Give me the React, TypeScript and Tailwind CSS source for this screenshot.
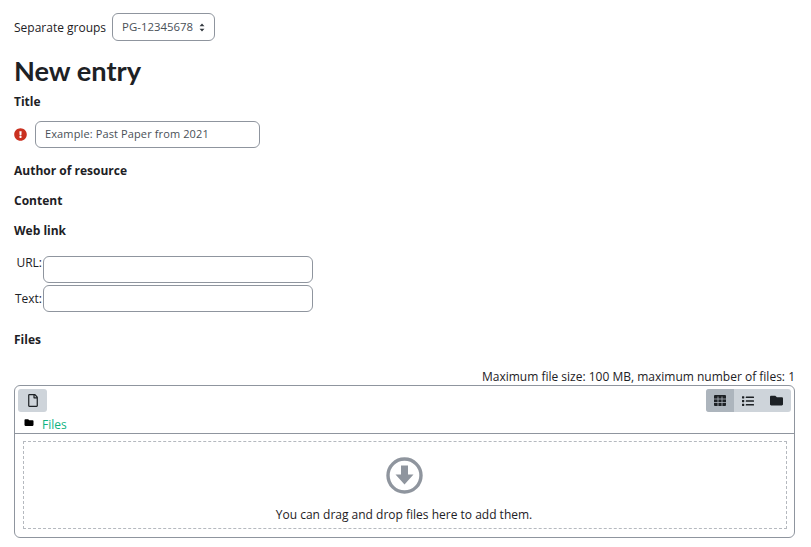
import { FaExclamationCircle, FaFolder, FaList, FaRegFile } from "react-icons/fa";

const Label = ({ text, className }: { text: string; className: string }) => (
  <div className={`text-[12px] leading-[18px] font-bold text-[#1d2125] ${className}`}>{text}</div>
);

const App = () => {
  return (
    <div className="w-[811px] h-[547px] overflow-hidden bg-white pl-[14px] pr-[16px] pt-[13px] font-['Open_Sans',sans-serif] text-[#1d2125]">
      {/* group selector */}
      <div className="flex items-center h-[28px] text-[12px]">
        <span className="mr-[6px] pt-[1px]">Separate groups</span>
        <div className="flex items-center h-[28px] w-[103px] pl-[9px] border border-[#8f959e] rounded-[6px] text-[#495057] text-[11.4px]">
          <span>PG-12345678</span>
          <svg className="ml-[6px]" width="6" height="9" viewBox="0 0 7 11">
            <path d="M3.5 0.5 L6.5 4 H0.5 Z M3.5 10.5 L6.5 7 H0.5 Z" fill="#343a40" />
          </svg>
        </div>
      </div>

      <h1 className="mt-[13px] text-[27.2px] leading-[34px] font-bold font-['Lato',sans-serif]">New entry</h1>

      <Label text="Title" className="mt-[5px]" />
      <div className="flex items-center mt-[10px]">
        <FaExclamationCircle className="text-[#ca3120] w-[13px] h-[13px] mr-[8px]" />
        <div className="flex items-center w-[225px] h-[27px] pl-[9px] border border-[#8f959e] rounded-[6px] text-[11px] tracking-[0.12px] text-[#495057]">
          Example: Past Paper from 2021
        </div>
      </div>

      <Label text="Author of resource" className="mt-[14px]" />
      <Label text="Content" className="mt-[12px]" />
      <Label text="Web link" className="mt-[12px]" />

      {/* web link inputs */}
      <div className="mt-[16px] flex flex-col gap-[2px] text-[12px]">
        <div className="flex">
          <span className="w-[28px] mr-[1px] text-right leading-[12px] pt-[1px]">URL:</span>
          <div className="w-[270px] h-[27px] border border-[#8f959e] rounded-[6px]" />
        </div>
        <div className="flex items-center">
          <span className="w-[28px] mr-[1px] text-right">Text:</span>
          <div className="w-[270px] h-[27px] border border-[#8f959e] rounded-[6px]" />
        </div>
      </div>

      <Label text="Files" className="mt-[19px]" />

      <div className="mt-[20px] text-right text-[12px] leading-[16px]">
        Maximum file size: 100 MB, maximum number of files: 1
      </div>

      {/* file manager */}
      <div className="h-[153px] border border-[#8f959e] rounded-[6px] flex flex-col">
        <div className="h-[48px] border-b border-[#8f959e] px-[3px] pt-[3px] shrink-0">
          <div className="flex justify-between">
            <div className="flex items-center justify-center w-[29px] h-[23px] bg-[#ced4da] rounded-[3px]">
              <FaRegFile className="w-[10px] h-[13px] text-[#1d2125]" />
            </div>
            <div className="flex h-[23px] bg-[#ced4da] rounded-[3px] overflow-hidden">
              <div className="flex items-center justify-center w-[28px] bg-[#adb5bd]">
                <svg width="12" height="11" viewBox="0 0 12 11">
                  <rect width="12" height="11" rx="1" fill="#1d2125" />
                  <path d="M4 1.5 V11 M8 1.5 V11 M0 4 H12 M0 7.5 H12" stroke="#adb5bd" strokeWidth="0.8" />
                </svg>
              </div>
              <div className="flex items-center justify-center w-[29px] pr-[1px]">
                <FaList className="w-[12px] h-[12px] text-[#1d2125]" />
              </div>
              <div className="flex items-center justify-center w-[28px] pr-[2px]">
                <FaFolder className="w-[13px] h-[13px] text-[#1d2125]" />
              </div>
            </div>
          </div>
          <div className="flex items-center mt-[5px] h-[16px] pl-[6px] text-[12px]">
            <FaFolder className="w-[10px] h-[9px] text-black -mt-[6px]" />
            <span className="ml-[8px] text-[#0fb37f]">Files</span>
          </div>
        </div>
        <div className="flex-1 pt-[7px] pl-[8px] pr-[7px]">
          <div className="h-[88px] border border-dashed border-[#b5b9bf] pr-[2px] flex flex-col items-center">
            <svg className="mt-[15px]" width="37" height="37" viewBox="0 0 37 37">
              <circle cx="18.5" cy="18.5" r="16.5" fill="none" stroke="#8f959e" strokeWidth="3.4" />
              <path d="M15 8.5 H22 V17.5 H27.5 L18.5 27.5 L9.5 17.5 H15 Z" fill="#8f959e" />
            </svg>
            <div className="mt-[13px] text-[12px] leading-[16px]">You can drag and drop files here to add them.</div>
          </div>
        </div>
      </div>
    </div>
  );
};

export default App;
